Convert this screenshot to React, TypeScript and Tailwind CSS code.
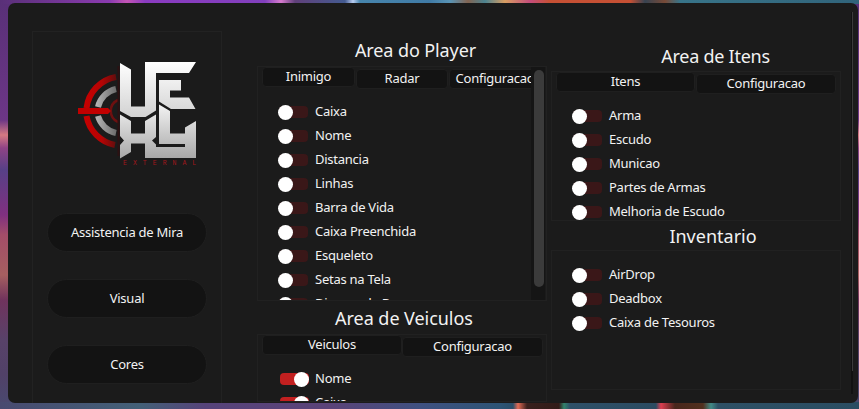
import React from 'react';
import clsx from 'clsx';

const PLAYER_OPTIONS = [
  'Caixa',
  'Nome',
  'Distancia',
  'Linhas',
  'Barra de Vida',
  'Caixa Preenchida',
  'Esqueleto',
  'Setas na Tela',
  'Disparo de Boss',
];
const ITEM_OPTIONS = ['Arma', 'Escudo', 'Municao', 'Partes de Armas', 'Melhoria de Escudo'];
const INVENTORY_OPTIONS = ['AirDrop', 'Deadbox', 'Caixa de Tesouros'];
const VEHICLE_OPTIONS = ['Nome', 'Caixa'];
const MENU = ['Assistencia de Mira', 'Visual', 'Cores'];

const Logo: React.FC = () => (
  <svg viewBox="0 0 120 106" className="w-[120px] h-[106px]">
    <defs>
      <linearGradient id="metal" gradientUnits="userSpaceOnUse" x1="18" y1="0" x2="39" y2="0">
        <stop offset="0" stopColor="#b5b5b5" />
        <stop offset="1" stopColor="#6a6a6a" />
      </linearGradient>
      <linearGradient id="blood" gradientUnits="userSpaceOnUse" x1="5" y1="0" x2="39" y2="0">
        <stop offset="0" stopColor="#c80000" />
        <stop offset="0.55" stopColor="#b50404" />
        <stop offset="1" stopColor="#5c0e0e" />
      </linearGradient>
      <linearGradient id="upper" gradientUnits="userSpaceOnUse" x1="0" y1="2" x2="0" y2="57">
        <stop offset="0" stopColor="#ffffff" />
        <stop offset="1" stopColor="#d2d2d2" />
      </linearGradient>
      <linearGradient id="lower" gradientUnits="userSpaceOnUse" x1="0" y1="45" x2="0" y2="98">
        <stop offset="0" stopColor="#f2f2f2" />
        <stop offset="1" stopColor="#a8a8a8" />
      </linearGradient>
    </defs>
    {/* mira */}
    <g fill="none">
      <path d="M38 17 A36 36 0 0 0 8.500 48" stroke="url(#blood)" strokeWidth="6" />
      <path d="M8.500 56 A36 36 0 0 0 37 85" stroke="url(#blood)" strokeWidth="6" />
      <path d="M38 29 A24 24 0 0 0 20 47" stroke="url(#metal)" strokeWidth="6" />
      <path d="M20 56 A24 24 0 0 0 38 73" stroke="url(#metal)" strokeWidth="6" />
      <path d="M40 40 A12 12 0 0 0 40 62" stroke="#6d1010" strokeWidth="2.500" />
      <path d="M40.500 6 V96" stroke="#2c1112" strokeWidth="2" />
    </g>
    <path d="M0 48 H30 L33 51 L30 54 H0 Z" fill="#c00000" />
    {/* monograma */}
    <g fill="url(#upper)">
      <path d="M42 3 L53 9.500 V46.500 H67 V2 H118 L111 13 H78 V50.500 L67.500 57 H53 L42 51 Z" />
      <path d="M81 20 H103 V30.500 H92 V37.500 H111 L117.500 49 H93 L81 41.500 Z" />
    </g>
    <g fill="url(#lower)">
      <path d="M42 54.500 L53 61 V73.500 H67 V61 L78 54.500 V77 L74 80.500 L78 84.500 V87 H107 V84 H81 V44.500 L92 51 V73.500 H107 V67.500 L118 61 V98 H67 V83.500 H53 V92 L42 98.500 V85 L46 80.500 L42 76 Z" />
    </g>
    <text
      x="45"
      y="104.500"
      className="font-['Liberation_Mono',monospace] text-[6.5px]"
      fill="#a0171b"
      textLength="73"
    >
      EXTERNAL
    </text>
  </svg>
);

const Toggle: React.FC<{ on?: boolean }> = ({ on }) => (
  <span className="flex h-[15px] w-[31px] shrink-0 items-center">
    <span
      className={clsx(
        'flex h-3 w-[29px] items-center rounded-[4px]',
        on ? 'ml-[2px] justify-end bg-[#c22020]' : 'ml-[1px] bg-[#3a1718]',
      )}
    >
      <span className={clsx('size-[15px] shrink-0 rounded-full bg-white', !on && '-ml-px')} />
    </span>
  </span>
);

const OptionList: React.FC<{ options: string[]; on?: boolean }> = ({ options, on }) => (
  <ul className="flex flex-col pl-5">
    {options.map((option) => (
      <li key={option} className="flex h-6 shrink-0 items-center gap-[6px] whitespace-nowrap">
        <Toggle on={on} />
        <span className="pb-[2px]">{option}</span>
      </li>
    ))}
  </ul>
);

const Tab: React.FC<{ label: string; active?: boolean; className?: string }> = ({ label, active, className }) => (
  <button
    className={clsx(
      'flex h-5 shrink-0 items-center justify-center whitespace-nowrap rounded-[4px] border border-[#1f1f1f] bg-[#131313] pb-[2px]',
      !active && 'mt-[2px]',
      className,
    )}
  >
    {label}
  </button>
);

const App: React.FC = () => {
  return (
    <div className="h-[409px] w-[859px] overflow-hidden bg-[linear-gradient(90deg,#593078_0,#8b3bb0_110px,#c455b5_127px,#8a3bc0_145px,#8240bd_265px,#d77bce_281px,#60407a_295px,#445b91_345px,#b9cdf1_353px,#4785ad_360px,#407ba6_430px,#5994b5_450px,#826452_468px,#4c8390_485px,#d89d62_505px,#c44d7b_530px,#c65034_550px,#c65034_630px,#374351_645px,#784a37_665px,#387489_680px,#31647b_859px),linear-gradient(90deg,#484a70_0,#436077_140px,#56437a_205px,#5b4379_330px,#3f5181_420px,#2d5475_500px,#2a4e69_513px,#e36b55_518px,#38201d_527px,#321b18_559px,#32836b_564px,#2e5068_570px,#2b4b61_656px,#dd3e50_661px,#48261c_675px,#51301e_703px,#418a86_711px,#2e5065_718px,#2a4d62_859px),linear-gradient(180deg,#593078_0,#6c3686_120px,#d57a82_135px,#8f4385_148px,#574087_170px,#803080_215px,#a34d68_235px,#a65f60_275px,#70335d_300px,#584269_340px,#514168_375px,#484a70_409px)] bg-[length:859px_4px,859px_7px,859px_409px] bg-[position:0_0,0_402px,0_0] bg-no-repeat pt-[3px] pl-2 font-['Noto_Sans',sans-serif] text-[13px] leading-[18px] tracking-[-0.25px] text-[#f2f2f2]">
      <div className="flex h-[400px] w-[850px] overflow-hidden rounded-[7px] bg-[#1b1b1b]">
        {/* Menu lateral */}
        <aside className="mt-7 ml-6 flex h-[390px] w-[190px] shrink-0 flex-col items-center border border-[#222222]">
          <div className="mt-[28px] ml-[22px]">
            <Logo />
          </div>
          <nav className="mt-[47px] flex flex-col gap-[27px]">
            {MENU.map((item) => (
              <button
                key={item}
                className="h-[39px] w-[160px] rounded-full border border-[#1f1f1f] bg-[#131313] pb-[2px]"
              >
                {item}
              </button>
            ))}
          </nav>
        </aside>

        {/* Player e veiculos */}
        <main className="ml-[35px] flex w-[290px] shrink-0 flex-col">
          <h2 className="mt-[34px] flex h-[27px] shrink-0 items-center justify-center pl-[27px] pb-px text-[18px] tracking-[-0.1px]">
            Area do Player
          </h2>
          <section className="mt-[2px] flex h-[235px] shrink-0 overflow-hidden border border-[#212121]">
            <div className="flex w-[273px] flex-col overflow-hidden">
              <div className="flex gap-px pl-[4px]">
                <Tab label="Inimigo" active className="w-[93px]" />
                <Tab label="Radar" className="w-[92px]" />
                <Tab label="Configuracao" className="w-[92px]" />
              </div>
              <div className="mt-[11px]">
                <OptionList options={PLAYER_OPTIONS} />
              </div>
            </div>
            <div className="w-[14px] bg-[#151515] pt-[3px] pl-[3px]">
              <div className="h-[217px] w-[10px] rounded-[5px] bg-[#3b3b3b]" />
            </div>
          </section>
          <h2 className="mt-px flex h-[32px] shrink-0 items-center justify-center pl-[4px] text-[18px] tracking-[-0.05px]">
            Area de Veiculos
          </h2>
          <section className="h-[68px] shrink-0 overflow-hidden border border-[#212121]">
            <div className="flex pl-[4px]">
              <Tab label="Veiculos" active className="w-[140px]" />
              <Tab label="Configuracao" className="w-[141px]" />
            </div>
            <div className="mt-[10px]">
              <OptionList options={VEHICLE_OPTIONS} on />
            </div>
          </section>
        </main>

        {/* Itens e inventario */}
        <main className="ml-[4px] flex w-[290px] shrink-0 flex-col">
          <h2 className="mt-[39px] flex h-[29px] shrink-0 items-center justify-center pl-[39px] pb-[2px] text-[18px] tracking-[-0.25px]">
            Area de Itens
          </h2>
          <section className="h-[150px] shrink-0 overflow-hidden border border-[#212121]">
            <div className="flex gap-px pl-[4px]">
              <Tab label="Itens" active className="w-[139px]" />
              <Tab label="Configuracao" className="w-[140px]" />
            </div>
            <div className="mt-[10px]">
              <OptionList options={ITEM_OPTIONS} />
            </div>
          </section>
          <h2 className="flex h-[29px] shrink-0 items-center justify-center pl-[34px] text-[18px] tracking-normal">
            Inventario
          </h2>
          <section className="h-[140px] shrink-0 border border-[#212121] pt-[12px]">
            <OptionList options={INVENTORY_OPTIONS} />
          </section>
        </main>

        <div className="mt-[9px] ml-[10px] h-[382px] w-[2px] bg-[#111111]">
          <div className="ml-px h-[359px] w-px bg-[#3b3b3b]" />
        </div>
      </div>
    </div>
  );
};

export default App;
